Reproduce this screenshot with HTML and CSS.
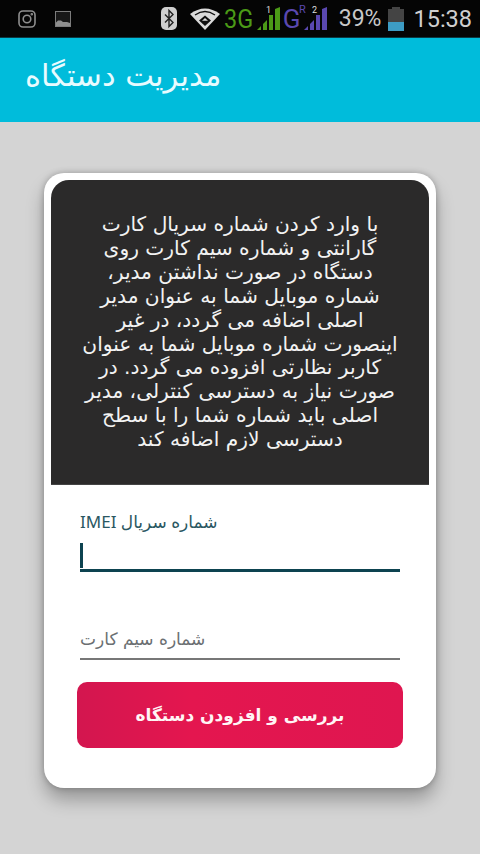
FILE: index.html
```html
<!DOCTYPE html>
<html lang="fa">
<head>
<meta charset="utf-8">
<title>مدیریت دستگاه</title>
<link rel="stylesheet" href="styles.css">
</head>
<body>
<div class="status">
  <div class="status-left">
    <svg class="ic" width="18" height="18" viewBox="0 0 18 18" fill="none" stroke="#8f8f8f" stroke-width="1.6"><rect x="1" y="1" width="16" height="16" rx="4"/><circle cx="9" cy="9" r="3.8"/><circle cx="13.8" cy="4.2" r=".5" fill="#8f8f8f"/></svg>
    <svg class="ic" width="16" height="16" viewBox="0 0 16 16"><rect x="0" y="0" width="16" height="16" fill="#7c7c7c"/><rect x="1" y="1" width="14" height="14" fill="#181818"/><path d="M1 13 V11.5 L3 9.5 h3 l2 1.5 h4 l3 1 V15 H1Z" fill="#8e8e8e"/></svg>
  </div>
  <div class="status-right">
    <svg class="bt" width="16" height="23" viewBox="0 0 16 23"><rect x="0" y="0" width="16" height="23" rx="5" fill="#cfcfcf"/><path d="M4 7.5 L12 15.5 L8 19.5 V3.5 L12 7.5 L4 15.5" fill="none" stroke="#222" stroke-width="1.4"/></svg>
    <svg class="wifi" width="30" height="22" viewBox="0 0 30 22"><path d="M0 6 Q15 -5 30 6 L15 22Z" fill="#dcdcdc"/><path d="M5 7 Q15 0 25 7" fill="none" stroke="#111" stroke-width="1.3"/><path d="M15 7.5 L21 12.5 L15 18 L9 12.5Z" fill="#111"/><path d="M15 10 L18 12.7 H12Z" fill="#dcdcdc"/></svg>
    <span class="net green">3G</span>
    <svg class="sig" width="24" height="25" viewBox="0 0 24 25"><text x="10" y="7" class="sim">1</text><path d="M1 24 l4-4 v4Z M7 24 V18 l4-4 V24Z M13 24 V9 h4 V24Z M19 24 V3 l5-2 V24Z" fill="#4b9a17"/></svg>
    <span class="net blue">G<sup class="r">R</sup></span>
    <svg class="sig" width="24" height="25" viewBox="0 0 24 25"><text x="9" y="7" class="sim">2</text><path d="M1 24 l4-4 v4Z M7 24 V18 l4-4 V24Z M13 24 V9 h4 V24Z M19 24 V3 l5-2 V24Z" fill="#5a48b0"/></svg>
    <span class="pct">39%</span>
    <svg class="bat" width="16" height="24" viewBox="0 0 16 24"><rect x="4" y="0" width="8" height="2" fill="#444"/><rect x="0" y="2" width="16" height="13" fill="#444"/><rect x="0" y="15" width="16" height="9" fill="#3d9cc4"/></svg>
    <span class="time">15:38</span>
  </div>
</div>
<header class="appbar"><h1 class="title">مدیریت دستگاه</h1></header>
<main class="content">
  <section class="card">
    <div class="notice">
      <p class="notice-text">با وارد کردن شماره سریال کارت<br>گارانتی و شماره سیم کارت روی<br>دستگاه در صورت نداشتن مدیر،<br>شماره موبایل شما به عنوان مدیر<br>اصلی اضافه می گردد، در غیر<br>اینصورت شماره موبایل شما به عنوان<br>کاربر نظارتی افزوده می گردد. در<br>صورت نیاز به دسترسی کنترلی، مدیر<br>اصلی باید شماره شما را با سطح<br>دسترسی لازم اضافه کند</p>
    </div>
    <form class="form">
      <div class="field field-active">
        <label class="float-label">شماره سریال IMEI</label>
        <div class="line-active"><span class="caret"></span></div>
      </div>
      <div class="field field-idle">
        <span class="placeholder">شماره سیم کارت</span>
      </div>
      <button type="button" class="btn">بررسی و افزودن دستگاه</button>
    </form>
  </section>
</main>
</body>
</html>
```
FILE: styles.css
```css
* { box-sizing: border-box; }
html, body { margin: 0; padding: 0; }
body {
  width: 480px; height: 854px; overflow: hidden;
  background: #d4d4d4;
  font-family: "DejaVu Sans", sans-serif;
  display: flex; flex-direction: column;
}
.status {
  height: 38px; background: #050505;
  display: flex; justify-content: space-between; align-items: center;
  padding: 0 8px 0 18px;
  flex: none;
  border-bottom: 1px solid #0b3a44;
}
.status-left { display: flex; align-items: center; gap: 19px; }
.status-right { display: flex; align-items: center; }
.wifi { margin-left: 13px; }
.net { font: 26px "Roboto", sans-serif; position: relative; line-height: 28px; }
.green { color: #4b9a17; margin-left: 4px; width: 29px; transform: scaleX(.9); transform-origin: left; }
.blue { color: #5a48b0; width: 20px; margin-left: 3px; }
.r { font-size: 11px; color: #5a48b0; position: absolute; top: -1px; right: -3px; line-height: 12px; }
.sig { margin-left: 3px; }
.blue + .sig { margin-left: 0; }
.sim { font: 9px "Roboto", sans-serif; fill: #ddd; }
.pct { font: 23px "Roboto", sans-serif; color: #c8c8c8; margin-left: 12px; }
.bat { margin-left: 7px; }
.time { font: 23.5px "Roboto", sans-serif; color: #cfcfcf; margin-left: 9px; }
.appbar {
  height: 84px; background: #00bcdb; flex: none;
  display: flex; align-items: flex-start; justify-content: flex-start;
  padding: 18px 0 0 25px;
}
.title { margin: 0; font-size: 30.5px; line-height: 40px; font-weight: 400; color: #e8fbff; direction: rtl; }
.content { flex: 1; padding: 51px 44px 0 44px; }
.card {
  background: #fff; border-radius: 20px; height: 615px; padding: 7px 7px 0;
  box-shadow: 0 12px 18px rgba(0,0,0,.28), 0 0 6px rgba(0,0,0,.25);
}
.notice {
  background: #2b2a2a; height: 305px; border-radius: 18px 18px 0 0;
  padding-top: 33px; border-bottom: 1px solid #444;
}
.notice-text {
  margin: 0; color: #f2f2f2; font-size: 20.2px; line-height: 23.9px; text-align: center; direction: rtl;
}
.form { padding: 0 29px 0 26px; }
.field { display: flex; flex-direction: column; margin-left: 3px; }
.field-active { height: 89px; padding-top: 23px; }
.float-label { font-size: 17px; line-height: 28px; color: #2a5762; direction: rtl; text-align: left; font-family: "Noto Sans", "DejaVu Sans", sans-serif; }
.line-active { flex: none; height: 36px; border-bottom: 3px solid #0d4350; padding-top: 7px; }
.caret { display: block; width: 3px; height: 25px; background: #0d4350; }
.field-idle { height: 86px; justify-content: flex-end; border-bottom: 2px solid #777; padding-bottom: 6px; }
.placeholder { font-size: 17px; line-height: 26px; color: #6b6f72; direction: rtl; text-align: left; }
.btn {
  display: block; width: 326px; height: 66px; margin: 22px 0 0 0; border: 0; border-radius: 10px;
  background: linear-gradient(90deg, #d3164f 0%, #e4164f 35%, #df1650 100%);
  color: #fff5f5; font-family: "DejaVu Sans", sans-serif; font-weight: 700; font-size: 17px; direction: rtl;
}
```
